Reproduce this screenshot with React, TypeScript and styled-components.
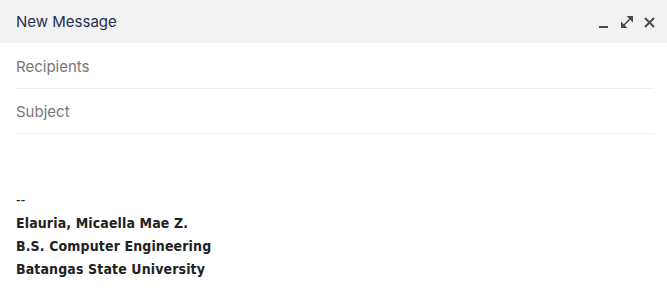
import React from 'react'
import styled, { createGlobalStyle } from 'styled-components'

const GlobalStyle = createGlobalStyle`
  html, body {
    margin: 0;
    padding: 0;
    background: #fff;
  }
  body {
    font-family: Inter, Roboto, "Noto Sans", sans-serif;
  }
`

const Window = styled.div`
  width: 667px;
  height: 299px;
  display: flex;
  flex-direction: column;
  background: #fff;
  overflow: hidden;
`

const Header = styled.div`
  height: 43px;
  flex-shrink: 0;
  display: flex;
  align-items: center;
  justify-content: space-between;
  padding: 0 11px 0 16px;
  background: #f2f2f2;
`

const Title = styled.span`
  font-size: 15px;
  color: #1f2f55;
  font-weight: 400;
`

const Controls = styled.div`
  display: flex;
  align-items: center;
  gap: 10px;
  padding-top: 1px;
`

const IconButton = styled.button`
  width: 13px;
  height: 14px;
  padding: 0;
  border: none;
  background: none;
  display: flex;
  align-items: center;
  justify-content: center;
  color: #4a4a4a;
  cursor: pointer;
`

const Body = styled.div`
  display: flex;
  flex-direction: column;
  padding: 1px 13px 0 15px;
`

const Field = styled.div`
  height: 45px;
  box-sizing: border-box;
  display: flex;
  align-items: center;
  border-bottom: 1px solid #eceef1;
  padding-left: 1px;
  font-size: 15px;
  color: #777;
`

const Signature = styled.div`
  margin-top: 55px;
  padding-left: 1px;
  font-family: "DejaVu Sans Condensed", "DejaVu Sans", Verdana, sans-serif;
  font-size: 14px;
  line-height: 23px;
  letter-spacing: 0.12px;
  color: #222;
`

const SigLine = styled.div<{ $bold?: boolean }>`
  font-weight: ${p => (p.$bold ? 700 : 400)};
`

const App = () => (
  <>
    <GlobalStyle />
    <Window>
      <Header>
        <Title>New Message</Title>
        <Controls>
          <IconButton aria-label="Minimize">
            <svg width="11" height="13" viewBox="0 0 11 13">
              <rect x="1" y="10" width="9" height="2" fill="currentColor" />
            </svg>
          </IconButton>
          <IconButton aria-label="Full screen">
            <svg width="12" height="12" viewBox="0 0 13 13" fill="currentColor">
              <path d="M3 10 L10 3" stroke="currentColor" strokeWidth="1.8" />
              <path d="M13 0 H6 L13 7 Z" />
              <path d="M0 13 H7 L0 6 Z" />
            </svg>
          </IconButton>
          <IconButton aria-label="Close">
            <svg width="11" height="11" viewBox="0 0 11 11" stroke="currentColor" strokeWidth="1.9">
              <path d="M1 1 L10 10 M10 1 L1 10" />
            </svg>
          </IconButton>
        </Controls>
      </Header>
      <Body>
        <Field>Recipients</Field>
        <Field>Subject</Field>
        <Signature>
          <SigLine>--</SigLine>
          <SigLine $bold>Elauria, Micaella Mae Z.</SigLine>
          <SigLine $bold>B.S. Computer Engineering</SigLine>
          <SigLine $bold>Batangas State University</SigLine>
        </Signature>
      </Body>
    </Window>
  </>
)

export default App
